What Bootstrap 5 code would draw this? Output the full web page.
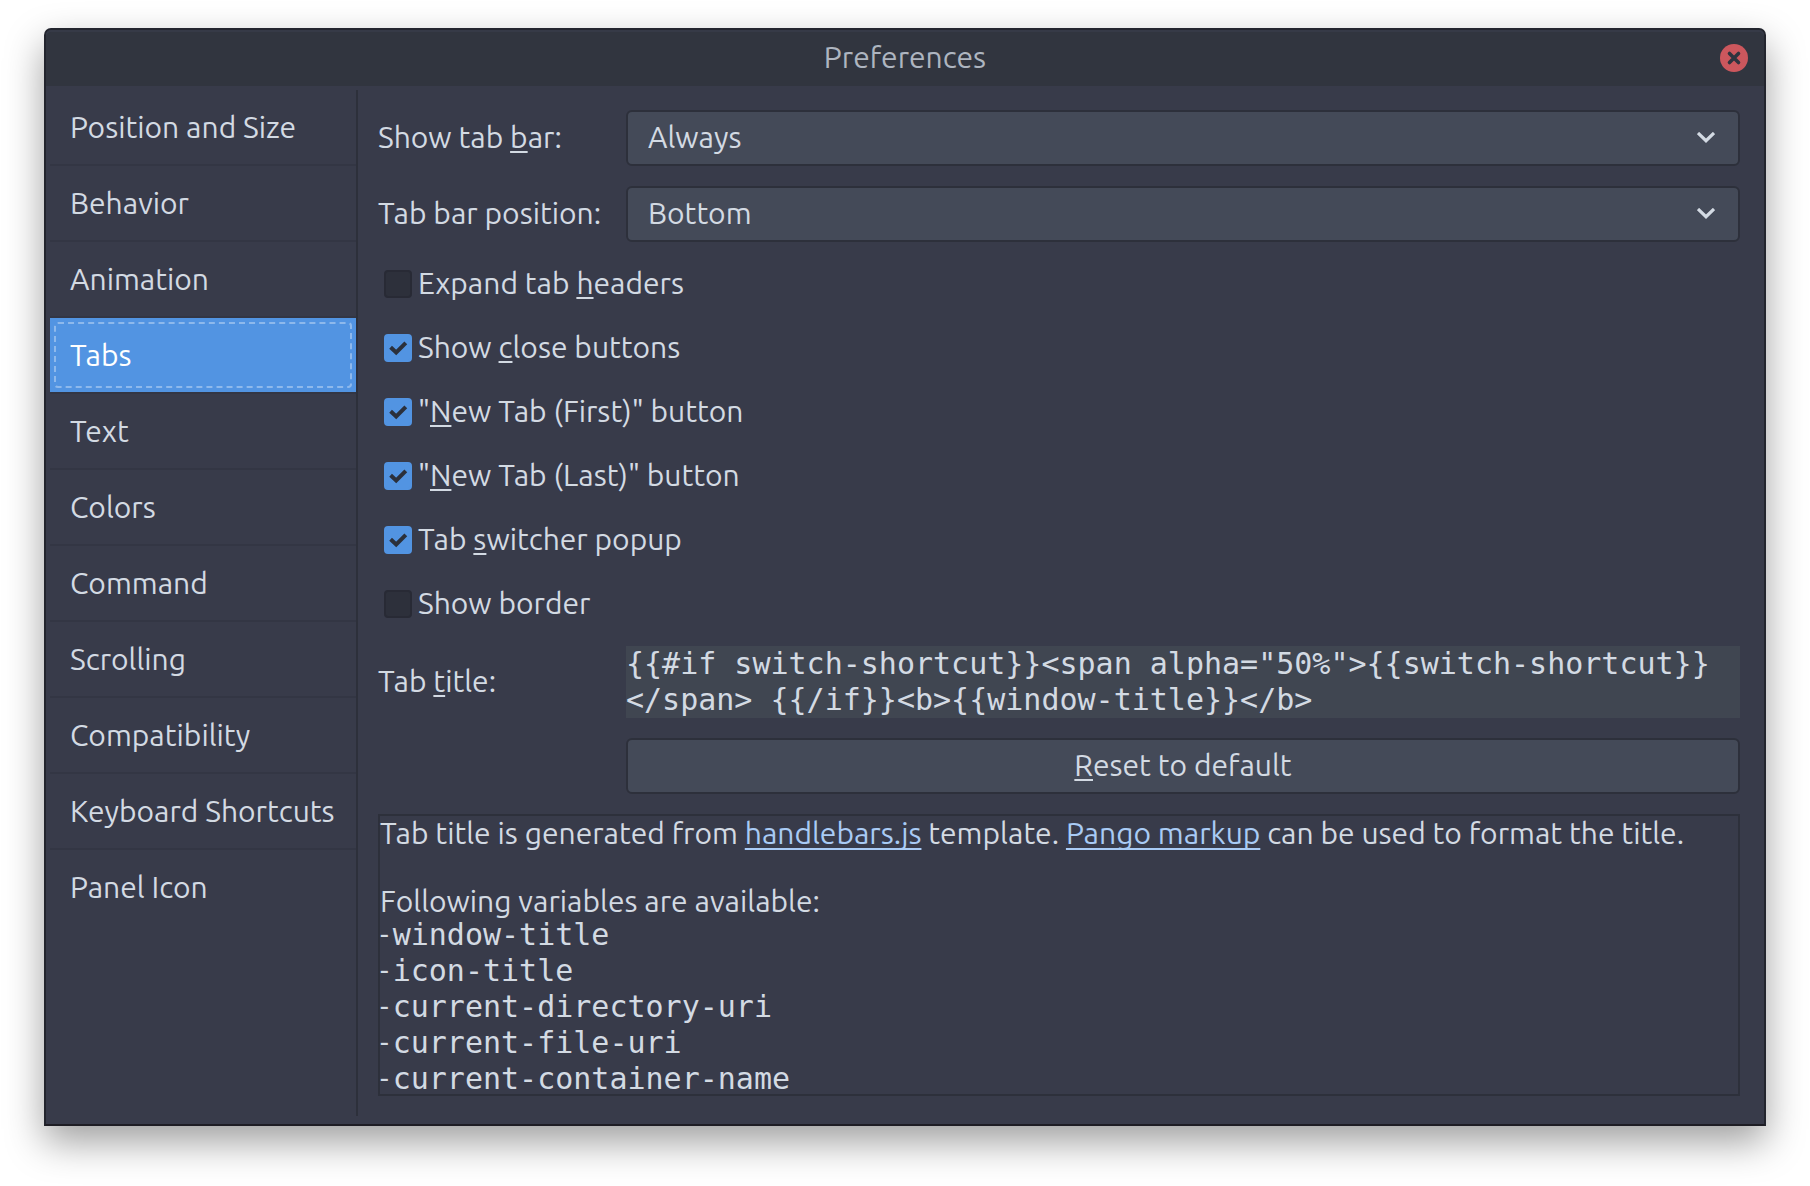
<!DOCTYPE html>
<html lang="en">
<head>
<meta charset="utf-8">
<meta name="viewport" content="width=device-width, initial-scale=1">
<title>Preferences</title>
<link rel="stylesheet" href="https://cdn.jsdelivr.net/npm/bootstrap@5.3.0/dist/css/bootstrap.min.css">
<style>
  :root {
    --pf-bg: #383b4a;
    --pf-header: #31353f;
    --pf-line: #2d303b;
    --pf-text: #d3dae3;
    --pf-button: #444a58;
    --pf-accent: #5294e2;
  }
  body {
    padding: 28px 44px 60px;
    background: #fff;
    color: var(--pf-text);
    font-family: Ubuntu, "Noto Sans", sans-serif;
    font-size: 30px;
    line-height: 34px;
  }
  .dialog-window {
    border: 2px solid #23252e;
    border-bottom-color: #1e1d24;
    border-radius: 7px 7px 0 0;
    background: var(--pf-bg);
    box-shadow: 0 16px 38px rgba(0, 0, 0, .38);
  }
  .title-bar {
    height: 56px;
    padding: 0 16px;
    background: var(--pf-header);
    box-shadow: inset 0 2px #363a47;
    border-radius: 5px 5px 0 0;
  }
  .title-bar h1 { padding-bottom: 2px; font-size: 30px; line-height: 34px; font-weight: 400; color: #aeb5c0; }
  .title-bar::before { content: ""; width: 28px; }
  .close-button { width: 28px; height: 28px; border: 0; padding: 0; background: none; }
  .close-button svg { display: block; }

  .side-pages { width: 308px; margin: 4px 0 8px 4px; border-right: 2px solid var(--pf-line); }
  .side-pages .list-group {
    --bs-list-group-bg: transparent;
    --bs-list-group-color: var(--pf-text);
    --bs-list-group-action-color: var(--pf-text);
    --bs-list-group-border-color: #333644;
    --bs-list-group-active-bg: var(--pf-accent);
    --bs-list-group-active-color: #fff;
    --bs-list-group-active-border-color: #333644;
  }
  .side-pages .list-group-item {
    height: 76px;
    padding: 0 0 0 20px;
    line-height: 74px;
    border-width: 0 0 2px;
    background-clip: padding-box;
    white-space: nowrap;
  }
  .side-pages .list-group-item + .list-group-item.active { margin-top: 0; border-top-width: 0; }
  .side-pages .list-group-item.active::after {
    content: "";
    position: absolute;
    inset: 4px;
    border: 2px dashed rgba(255, 255, 255, .35);
    border-radius: 4px;
  }

  .page-body { padding: 24px 24px 28px 20px; gap: 20px; min-width: 0; }
  .field-row { display: grid; grid-template-columns: 228px minmax(0, 1fr); column-gap: 20px; align-items: center; }
  .page-body label { padding-bottom: 2px; white-space: nowrap; }
  u { text-decoration-thickness: 2px; text-underline-offset: 3px; text-decoration-skip-ink: none; }

  .page-body .form-select {
    height: 56px;
    padding: 0 60px 2px 20px;
    border: 2px solid var(--pf-line);
    border-radius: 6px;
    color: var(--pf-text);
    font-size: 30px;
    line-height: 34px;
    background-color: var(--pf-button);
    background-image: url("data:image/svg+xml,%3Csvg xmlns='http://www.w3.org/2000/svg' width='18' height='12' viewBox='0 0 18 12'%3E%3Cpath d='M1 1 9 8.7 17 1' fill='none' stroke='%23d3dae3' stroke-width='3.2'/%3E%3C/svg%3E");
    background-size: 18px 12px;
    background-position: right 23px center;
  }
  .page-body .form-check { height: 44px; min-height: 0; margin: 0; padding: 0 0 0 6px; gap: 6px; }
  .page-body .form-check-input {
    float: none;
    flex: none;
    width: 28px;
    height: 28px;
    margin: 0;
    border: 2px solid #282a35;
    border-radius: 4px;
    background-color: #2d303b;
  }
  .page-body .form-check-input:checked {
    border-color: var(--pf-accent);
    background-color: var(--pf-accent);
    background-origin: border-box;
    background-size: 28px 28px;
    background-image: url("data:image/svg+xml,%3Csvg xmlns='http://www.w3.org/2000/svg' viewBox='0 0 28 28'%3E%3Cpath d='M6.6 13.2 12.2 18.4 21.8 8.8' fill='none' stroke='%232b303b' stroke-width='4'/%3E%3C/svg%3E");
  }
  .mono-text { font-family: "DejaVu Sans Mono", monospace; font-size: 30px; line-height: 36px; }
  .template-box {
    display: block;
    height: 72px;
    padding: 0;
    border: 0;
    border-radius: 0;
    background: #404651;
    color: var(--pf-text);
    resize: none;
    overflow: hidden;
  }
  .reset-button {
    --bs-btn-color: var(--pf-text);
    --bs-btn-bg: var(--pf-button);
    --bs-btn-border-color: var(--pf-line);
    height: 56px;
    padding: 0 0 2px;
    border-width: 2px;
    border-radius: 6px;
    font-size: 30px;
    line-height: 34px;
    grid-column: 2;
  }
  .help-frame { border: 2px solid var(--pf-line); }
  .help-frame p { margin: 0 0 34px; }
  .help-frame p:last-of-type { margin: 0; }
  .help-frame ul { margin: -1px 0 -3px; }
  .help-frame a { color: #a9cbf5; text-decoration-thickness: 2px; text-underline-offset: 4px; text-decoration-skip-ink: none; }
</style>
<script src="https://cdn.jsdelivr.net/npm/bootstrap@5.3.0/dist/js/bootstrap.bundle.min.js"></script>
</head>
<body>
<main class="dialog-window">
  <header class="title-bar d-flex align-items-center justify-content-between">
    <h1 class="m-0">Preferences</h1>
    <button type="button" class="close-button" aria-label="Close">
      <svg width="28" height="28" viewBox="0 0 28 28" aria-hidden="true">
        <circle cx="14" cy="14" r="14" fill="#cc575d"/>
        <path d="M9.5 9.5l9 9M18.5 9.5l-9 9" stroke="#2f343f" stroke-width="3.6" stroke-linecap="round"/>
      </svg>
    </button>
  </header>
  <div class="d-flex">
    <nav class="side-pages flex-shrink-0" aria-label="Preference pages">
      <div class="list-group list-group-flush">
        <a href="#" class="list-group-item list-group-item-action">Position and Size</a>
        <a href="#" class="list-group-item list-group-item-action">Behavior</a>
        <a href="#" class="list-group-item list-group-item-action">Animation</a>
        <a href="#" class="list-group-item list-group-item-action active" aria-current="page">Tabs</a>
        <a href="#" class="list-group-item list-group-item-action">Text</a>
        <a href="#" class="list-group-item list-group-item-action">Colors</a>
        <a href="#" class="list-group-item list-group-item-action">Command</a>
        <a href="#" class="list-group-item list-group-item-action">Scrolling</a>
        <a href="#" class="list-group-item list-group-item-action">Compatibility</a>
        <a href="#" class="list-group-item list-group-item-action">Keyboard Shortcuts</a>
        <a href="#" class="list-group-item list-group-item-action border-0">Panel Icon</a>
      </div>
    </nav>
    <form class="page-body d-flex flex-column flex-grow-1">
      <div class="field-row">
        <label for="show-bar">Show tab <u>b</u>ar:</label>
        <select id="show-bar" class="form-select"><option selected>Always</option></select>
      </div>
      <div class="field-row">
        <label for="bar-position">Tab bar position:</label>
        <select id="bar-position" class="form-select"><option selected>Bottom</option></select>
      </div>
      <div class="form-check d-flex align-items-center">
        <input class="form-check-input" type="checkbox" id="expand-headers">
        <label for="expand-headers">Expand tab <u>h</u>eaders</label>
      </div>
      <div class="form-check d-flex align-items-center">
        <input class="form-check-input" type="checkbox" id="close-buttons" checked>
        <label for="close-buttons">Show <u>c</u>lose buttons</label>
      </div>
      <div class="form-check d-flex align-items-center">
        <input class="form-check-input" type="checkbox" id="new-first" checked>
        <label for="new-first">"<u>N</u>ew Tab (First)" button</label>
      </div>
      <div class="form-check d-flex align-items-center">
        <input class="form-check-input" type="checkbox" id="new-last" checked>
        <label for="new-last">"<u>N</u>ew Tab (Last)" button</label>
      </div>
      <div class="form-check d-flex align-items-center">
        <input class="form-check-input" type="checkbox" id="switcher" checked>
        <label for="switcher">Tab <u>s</u>witcher popup</label>
      </div>
      <div class="form-check d-flex align-items-center">
        <input class="form-check-input" type="checkbox" id="show-border">
        <label for="show-border">Show border</label>
      </div>
      <div class="field-row">
        <label for="tab-title">Tab <u>t</u>itle:</label>
        <textarea id="tab-title" class="template-box mono-text w-100" rows="2" spellcheck="false">{{#if switch-shortcut}}&lt;span alpha="50%"&gt;{{switch-shortcut}}
&lt;/span&gt; {{/if}}&lt;b&gt;{{window-title}}&lt;/b&gt;</textarea>
      </div>
      <div class="field-row">
        <button type="button" class="btn reset-button"><u>R</u>eset to default</button>
      </div>
      <div class="help-frame">
        <p>Tab title is generated from <a href="#">handlebars.js</a> template. <a href="#">Pango markup</a> can be used to format the title.</p>
        <p>Following variables are available:</p>
        <ul class="list-unstyled">
          <li class="d-flex gap-1"><span>-</span><span class="mono-text">window-title</span></li>
          <li class="d-flex gap-1"><span>-</span><span class="mono-text">icon-title</span></li>
          <li class="d-flex gap-1"><span>-</span><span class="mono-text">current-directory-uri</span></li>
          <li class="d-flex gap-1"><span>-</span><span class="mono-text">current-file-uri</span></li>
          <li class="d-flex gap-1"><span>-</span><span class="mono-text">current-container-name</span></li>
        </ul>
      </div>
    </form>
  </div>
</main>
</body>
</html>
